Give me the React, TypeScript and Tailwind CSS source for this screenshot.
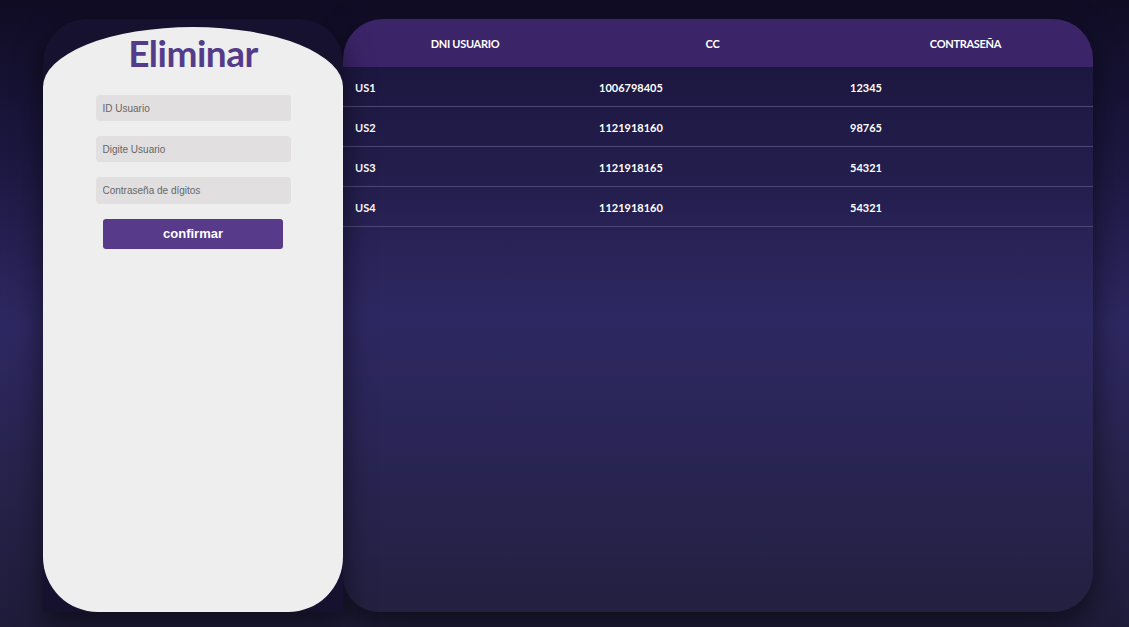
const rows = [
  { id: "US1", cc: "1006798405", pass: "12345" },
  { id: "US2", cc: "1121918160", pass: "98765" },
  { id: "US3", cc: "1121918165", pass: "54321" },
  { id: "US4", cc: "1121918160", pass: "54321" },
];

const App = () => {
  return (
    <div className="h-[627px] w-full overflow-hidden bg-[linear-gradient(180deg,#100c24_0%,#1c1740_25%,#2e2862_52%,#262249_78%,#1f1c3a_100%)] font-['Lato',sans-serif]">
      <div className="flex pl-[43px] pt-[19px]">
        {/* panel eliminar */}
        <div className="relative z-10 h-[593px] w-[300px] rounded-t-[44px] bg-[#16112e] pt-2 shadow-[0_12px_30px_rgba(0,0,0,0.55)]">
          <div className="flex h-full flex-col items-center rounded-t-[150px_60px] rounded-b-[55px] bg-[#eeeeee]">
            <h1 className="mt-[4px] text-[37px] font-bold leading-[44px] tracking-[-0.5px] text-[#553c8b]">Eliminar</h1>
            <form className="mt-[20px] flex flex-col items-center font-['Liberation_Sans',Arial,sans-serif]">
              <input placeholder="ID Usuario" className="h-[26px] w-[195px] rounded-[4px] bg-[#e1dfe0] px-[7px] text-[10px] text-[#555] placeholder:text-[#666] outline-none" />
              <input placeholder="Digite Usuario" className="mt-[15px] h-[26px] w-[195px] rounded-[4px] bg-[#e1dfe0] px-[7px] text-[10px] placeholder:text-[#666] outline-none" />
              <input placeholder="Contraseña de dígitos" className="mt-[15px] h-[27px] w-[195px] rounded-[4px] bg-[#e1dfe0] px-[7px] text-[10px] placeholder:text-[#666] outline-none" />
              <button type="button" className="mt-[15px] h-[30px] w-[180px] rounded-[3px] bg-[#583a8a] text-[13px] font-bold text-white">confirmar</button>
            </form>
          </div>
        </div>

        {/* tabla */}
        <div className="h-[593px] w-[750px] overflow-hidden rounded-[40px] rounded-bl-[36px] bg-[linear-gradient(180deg,#19143a_0%,#231d4c_25%,#2e2862_50%,#2a2556_70%,#232040_100%)] shadow-[0_12px_30px_rgba(0,0,0,0.55)]">
          <div className="grid h-[48px] grid-cols-[244px_251px_1fr] items-center bg-[#3b2468] pt-[2px] text-center text-[11px] font-bold tracking-[-0.3px] text-white">
            <div>DNI USUARIO</div>
            <div>CC</div>
            <div>CONTRASEÑA</div>
          </div>
          {rows.map((r) => (
            <div key={r.id} className="grid h-[40px] grid-cols-[244px_251px_1fr] items-center border-b border-[#4d4873] pt-[3px] text-[11px] font-bold text-white">
              <div className="pl-3">{r.id}</div>
              <div className="pl-3">{r.cc}</div>
              <div className="pl-3">{r.pass}</div>
            </div>
          ))}
        </div>
      </div>
    </div>
  );
};

export default App;
